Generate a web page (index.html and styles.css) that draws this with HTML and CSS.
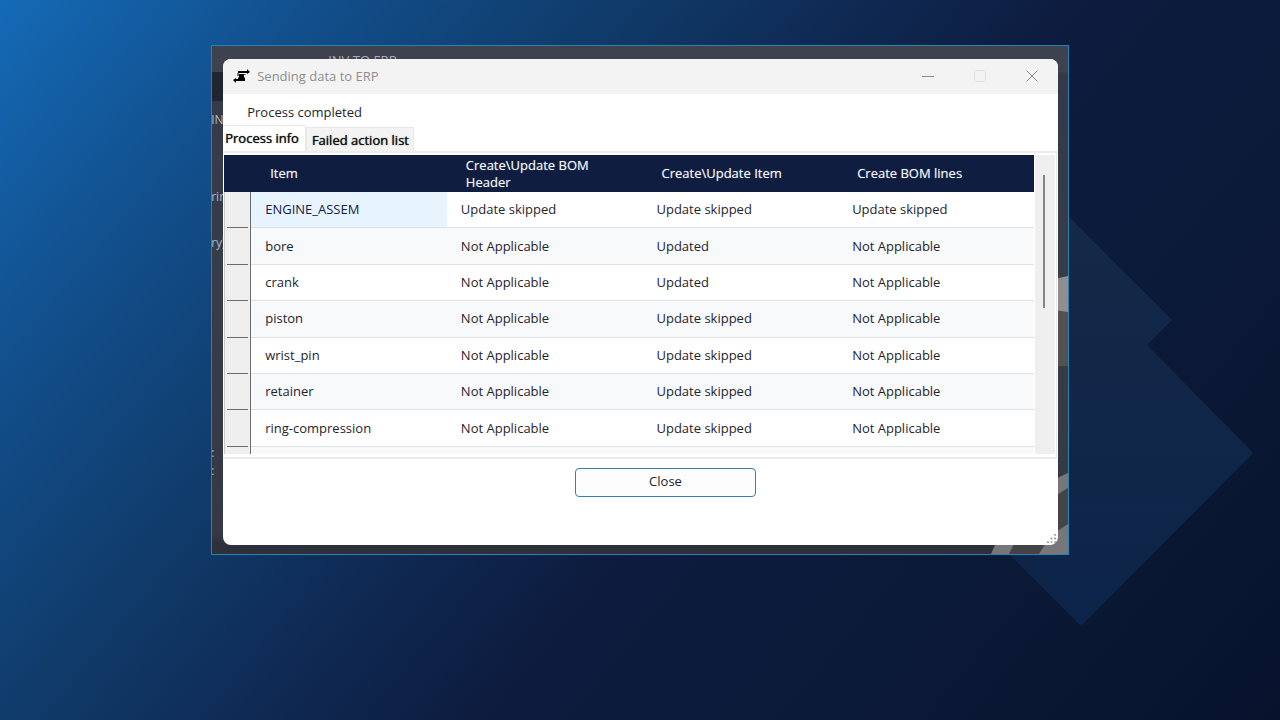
FILE: index.html
```html
<!DOCTYPE html>
<html lang="en">
<head>
<meta charset="utf-8">
<meta name="viewport" content="width=device-width, initial-scale=1">
<title>Sending data to ERP</title>
<link rel="stylesheet" href="styles.css">
</head>
<body>
<svg class="diamonds" viewBox="0 0 1280 720" preserveAspectRatio="xMidYMid slice" aria-hidden="true">
  <defs>
    <linearGradient id="dia" x1="0" y1="0" x2="0" y2="1">
      <stop offset="0" stop-color="#152947"/>
      <stop offset="1" stop-color="#0d244a"/>
    </linearGradient>
  </defs>
  <path fill="url(#dia)" d="M1050 198 1172 320 1147 345 1253 453 1081 626 930 475Z"/>
</svg>
<main class="app">
  <svg class="app-view" viewBox="0 0 80 300" aria-hidden="true">
    <path fill="#8f8f91" d="M66 25 80 22V58H66Z"/>
    <path fill="#525252" d="M66 56 80 58V112H66Z"/>
    <path fill="#77777b" d="M3 300C20 260 50 232 80 219V300Z"/>
    <path fill="#444347" d="M21 300C34 272 54 248 80 234V270Q62 280 51 300Z"/>
  </svg>
  <span class="app-title">INV TO ERP</span>
  <div class="app-tree" aria-hidden="true">
    <span class="tree-a">IN</span>
    <span class="tree-b">rim</span>
    <span class="tree-c">ry)</span>
    <span class="tree-d">:</span>
    <span class="tree-e">:</span>
  </div>
  <section class="dialog" role="dialog" aria-labelledby="dlg-title">
    <header class="titlebar">
      <svg class="app-icon" viewBox="0 0 17 14" aria-hidden="true">
        <path d="M5 2H14V0L17 3 14 5V4H5ZM6 5H11V8L12 9V10H5V9L6 8ZM12 10V12H3V14L0 11 3 9V10Z"/>
        <path class="shade" d="M4 4H6V7H4ZM11 5H13V6H11Z"/>
      </svg>
      <h1 id="dlg-title">Sending data to ERP</h1>
      <div class="window-buttons">
        <button type="button" aria-label="Minimize"><svg viewBox="0 0 12 12"><path d="M0 6.500H12"/></svg></button>
        <button type="button" aria-label="Maximize" disabled><svg viewBox="0 0 12 12"><rect x=".5" y=".5" width="11" height="11" rx="1"/></svg></button>
        <button type="button" aria-label="Close window"><svg viewBox="0 0 12 12"><path d="M.5.5l11 11M11.500.5l-11 11"/></svg></button>
      </div>
    </header>
    <p class="status">Process completed</p>
    <div class="tabs" role="tablist">
      <button class="tab tab-active" type="button" role="tab" aria-selected="true">Process info</button>
      <button class="tab" type="button" role="tab" aria-selected="false">Failed action list</button>
    </div>
    <div class="panel" role="tabpanel">
      <table class="grid">
        <colgroup><col class="col-marker"><col><col><col><col></colgroup>
        <thead>
          <tr><th></th><th>Item</th><th>Create\Update BOM Header</th><th>Create\Update Item</th><th>Create BOM lines</th></tr>
        </thead>
        <tbody>
          <tr><td class="marker"></td><td class="selected">ENGINE_ASSEM</td><td>Update skipped</td><td>Update skipped</td><td>Update skipped</td></tr>
          <tr><td class="marker"></td><td>bore</td><td>Not Applicable</td><td>Updated</td><td>Not Applicable</td></tr>
          <tr><td class="marker"></td><td>crank</td><td>Not Applicable</td><td>Updated</td><td>Not Applicable</td></tr>
          <tr><td class="marker"></td><td>piston</td><td>Not Applicable</td><td>Update skipped</td><td>Not Applicable</td></tr>
          <tr><td class="marker"></td><td>wrist_pin</td><td>Not Applicable</td><td>Update skipped</td><td>Not Applicable</td></tr>
          <tr><td class="marker"></td><td>retainer</td><td>Not Applicable</td><td>Update skipped</td><td>Not Applicable</td></tr>
          <tr><td class="marker"></td><td>ring-compression</td><td>Not Applicable</td><td>Update skipped</td><td>Not Applicable</td></tr>
          <tr class="partial"><td class="marker"></td><td></td><td></td><td></td><td></td></tr>
        </tbody>
      </table>
      <div class="scrollbar"><div class="thumb"></div></div>
    </div>
    <footer class="actions">
      <button class="close" type="button">Close</button>
    </footer>
    <svg class="grip" viewBox="0 0 10 10" aria-hidden="true">
      <path d="M8 0h2v2h-2zM8 4h2v2h-2zM4 4h2v2h-2zM8 8h2v2h-2zM4 8h2v2h-2zM0 8h2v2h-2z"/>
    </svg>
  </section>
</main>
</body>
</html>
```
FILE: styles.css
```css
* { box-sizing: border-box; }

body {
  margin: 0;
  min-height: 100vh;
  padding-top: 45px;
  font-family: "Open Sans", "Noto Sans", sans-serif;
  font-size: 13px;
  line-height: 17px;
  color: #1f242c;
  background: linear-gradient(130deg, #146ab6 0%, #12508e 16%, #103c6c 32%, #0f2a54 45%, #0d1c3f 57%, #0b1a38 75%, #07132d 100%);
}

button { font: inherit; color: inherit; }

.diamonds {
  position: absolute;
  inset: 0;
  width: 100%;
  height: 100%;
}

.app {
  position: relative;
  width: 67%;
  min-width: 640px;
  margin: 0 auto;
  padding: 13px 10px 9px 11px;
  overflow: hidden;
  border: 1px solid #2782b0;
  background:
    linear-gradient(#20252f, #20252f) 0 26px / 50% 29px no-repeat,
    linear-gradient(#3d424e 0, #3d424e 26px, #353a49 27px, #363c48 50%, #343945 96%, #2b303a 98%);
}

.app-view {
  position: absolute;
  right: 0;
  bottom: 0;
  width: 80px;
  height: 300px;
}

.app-title {
  position: absolute;
  top: 6px;
  left: 116px;
  color: #a9adb5;
}

.app-tree {
  position: absolute;
  inset: 0 auto 0 0;
  font-size: 12px;
  color: #b4b9c0;
}
.app-tree span { position: absolute; left: -1px; }
.tree-a { top: 65px; }
.tree-b { top: 142px; }
.tree-c { top: 188px; }
.tree-d { top: 398px; }
.tree-e { top: 416px; }

.dialog {
  position: relative;
  display: flex;
  flex-direction: column;
  overflow: hidden;
  border-radius: 8px;
  background: #fff;
}

.titlebar {
  display: flex;
  align-items: center;
  height: 35px;
  padding: 0 0 0 10px;
  background: #f3f3f3;
}
.app-icon { width: 17px; height: 14px; margin: 0 7px 2px 0; }
.app-icon .shade { fill: #777; }
.titlebar h1 {
  flex: 1;
  margin: 0;
  font-size: 13px;
  font-weight: 400;
  color: #8e8e8e;
}
.window-buttons { display: flex; }
.window-buttons button {
  width: 52px;
  height: 32px;
  margin-bottom: 2px;
  padding: 0;
  border: 0;
  background: none;
}
.window-buttons svg {
  display: block;
  width: 12px;
  height: 12px;
  margin: 0 auto;
  fill: none;
  stroke: #8b8b8b;
}
.window-buttons button:disabled svg { stroke: #dedede; }

.status {
  margin: 0;
  padding: 10px 24px 5px;
}

.tabs {
  display: flex;
  align-items: flex-end;
  height: 27px;
  border-bottom: 2px solid #ececec;
}
.tab {
  height: 24px;
  padding: 1px 4px 0 5px;
  border: 1px solid #e8e8e8;
  border-bottom: 0;
  background: #f3f3f3;
  font-weight: 500;
  color: #111;
  text-shadow: 0 0 1px #111;
}
.tab-active {
  height: 26px;
  padding: 0 6px 0 2px;
  border-left: 0;
  background: #fff;
}

.panel {
  display: flex;
  margin: 0 1px 0 0;
  padding: 2px 1px 3px 1px;
  border-right: 1px solid #e8e8e8;
  border-bottom: 2px solid #ececec;
}

.grid {
  flex: 1;
  width: 100%;
  height: 299px;
  table-layout: fixed;
  border-collapse: separate;
  border-spacing: 0;
  font-weight: 500;
}
.col-marker { width: 27px; }
.grid th {
  height: 37px;
  padding: 0 50px 0 19px;
  background: #0f1e40;
  color: #f4f5f8;
  font-weight: 500;
  text-align: left;
  text-shadow: 0 0 1px #f4f5f880;
}
.grid th:first-child { padding: 0; }
.grid td {
  height: 36px;
  padding: 0 14px;
  border-bottom: 1px solid #dfe2e5;
}
.grid tr:nth-child(even) td { background: #f7f9fb; }
.grid td.selected { background: #e8f4fd; color: #12204a; }
.grid td.marker,
.grid tr:nth-child(even) td.marker {
  padding: 0;
  border-right: 1px solid #6c6c6c;
  border-bottom: 0;
  border-left: 1px solid #c8c8c8;
  background: linear-gradient(#6c6c6c, #6c6c6c) center bottom / 21px 1px no-repeat, #efefef;
}
.grid tr.partial td { height: 7px; border-bottom-width: 0; }
.grid tr.partial td.marker { background: #efefef; }

.scrollbar {
  flex: none;
  width: 20px;
  margin-left: 1px;
  padding: 20px 10px 0 8px;
  background: #efefef;
}
.thumb { height: 133px; background: #858585; }

.actions {
  display: flex;
  justify-content: center;
  padding: 9px 0 48px 50px;
}
.close {
  width: 181px;
  height: 29px;
  padding: 0 0 2px;
  border: 1px solid #337eb9;
  border-radius: 4px;
  background: #fdfdfd;
}

.grip {
  position: absolute;
  right: 2px;
  bottom: 2px;
  width: 9px;
  height: 9px;
  fill: #a0a0a0;
}
```
